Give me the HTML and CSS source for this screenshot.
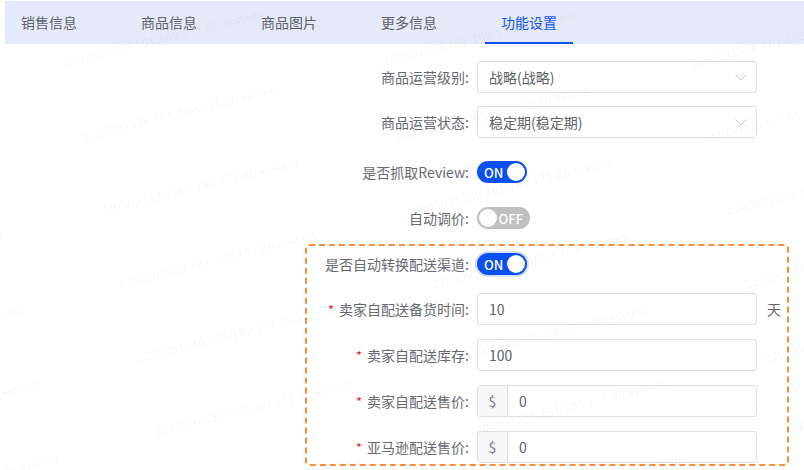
FILE: index.html
```html
<!DOCTYPE html>
<html lang="zh-CN">
<head>
<meta charset="utf-8">
<title>功能设置</title>
<link rel="stylesheet" href="styles.css">
</head>
<body>
<div class="page">
  <div class="tabs">
    <div class="tab">销售信息</div>
    <div class="tab">商品信息</div>
    <div class="tab">商品图片</div>
    <div class="tab">更多信息</div>
    <div class="tab active">功能设置</div>
  </div>

  <div class="form">
    <div class="row r1">
      <label class="label">商品运营级别:</label>
      <div class="select">
        <span>战略(战略)</span>
        <svg class="arrow" width="12" height="7" viewBox="0 0 12 7"><polyline points="0.5,0.5 6,6 11.5,0.5" fill="none" stroke="#c0c4cc" stroke-width="1"/></svg>
      </div>
    </div>
    <div class="row r2">
      <label class="label">商品运营状态:</label>
      <div class="select">
        <span>稳定期(稳定期)</span>
        <svg class="arrow" width="12" height="7" viewBox="0 0 12 7"><polyline points="0.5,0.5 6,6 11.5,0.5" fill="none" stroke="#c0c4cc" stroke-width="1"/></svg>
      </div>
    </div>
    <div class="row r3">
      <label class="label">是否抓取Review:</label>
      <div class="switch on"><span class="sw-text">ON</span><span class="knob"></span></div>
    </div>
    <div class="row r4">
      <label class="label">自动调价:</label>
      <div class="switch off"><span class="knob"></span><span class="sw-text">OFF</span></div>
    </div>

    <div class="box">
      <div class="row b1">
        <label class="label">是否自动转换配送渠道:</label>
        <div class="switch on focus"><span class="sw-text">ON</span><span class="knob"></span></div>
      </div>
      <div class="row b2">
        <label class="label"><i class="req">*</i>卖家自配送备货时间:</label>
        <div class="input"><span>10</span></div>
        <span class="unit">天</span>
      </div>
      <div class="row b3">
        <label class="label"><i class="req">*</i>卖家自配送库存:</label>
        <div class="input"><span>100</span></div>
      </div>
      <div class="row b3">
        <label class="label"><i class="req">*</i>卖家自配送售价:</label>
        <div class="input group"><span class="addon">$</span><span class="val">0</span></div>
      </div>
      <div class="row b3">
        <label class="label"><i class="req">*</i>亚马逊配送售价:</label>
        <div class="input group"><span class="addon">$</span><span class="val">0</span></div>
      </div>
    </div>
  </div>
</div>
<div class="watermark"><div class="wm-grid" id="wm"></div></div>
<script src="watermark.js"></script>
</body>
</html>
```

FILE: styles.css
```css
* { box-sizing: border-box; }
html, body { margin: 0; padding: 0; background: #fff; }
body {
  width: 804px;
  height: 470px;
  overflow: hidden;
  position: relative;
  font-family: "Noto Sans CJK SC", "Noto Sans", sans-serif;
  font-size: 13px;
  color: #606266;
}
.tabs {
  margin: 1px 0 0 5px;
  height: 43px;
  background: #e4eaf9;
  display: flex;
  gap: 32px;
}
.tab {
  padding: 2px 16px 0;
  height: 43px;
  line-height: 39px;
  font-size: 14px;
  color: #5f6268;
  border-bottom: 2px solid transparent;
}
.tab.active {
  color: #1553f0;
  border-bottom-color: #0a4ff5;
}
.form {
  padding-left: 305px;
  margin-top: 17px;
}
.row {
  display: flex;
  align-items: center;
  height: 32px;
}
.label {
  width: 164px;
  margin-right: 8px;
  text-align: right;
  white-space: nowrap;
  font-size: 14px;
  color: #666a70;
}
.box .label { width: 162px; }
.r2 { margin-top: 13px; }
.r3 { margin-top: 18px; }
.r4 { margin-top: 14px; }
.box {
  width: 484px;
  margin-top: 10px;
  border: 2px dashed #ff8a3a;
  border-radius: 4px;
  padding: 2px 0 1px;
}
.b2 { margin-top: 13px; }
.b3 { margin-top: 14px; }
.select, .input {
  width: 280px;
  height: 32px;
  border: 1px solid #dcdfe6;
  border-radius: 3px;
  display: flex;
  align-items: center;
  padding-left: 11px;
  font-size: 14px;
  color: #606266;
  background: #fff;
}
.select { justify-content: space-between; padding-right: 9px; }
.arrow { display: block; }
.input.group { padding-left: 0; }
.addon {
  width: 30px;
  height: 100%;
  background: #f5f7fa;
  border-right: 1px solid #dcdfe6;
  display: flex;
  align-items: center;
  justify-content: center;
  color: #777;
  border-radius: 3px 0 0 3px;
}
.val { padding-left: 11px; }
.unit { margin-left: 10px; font-size: 14px; color: #606266; }
.req {
  font-style: normal;
  font-size: 13px;
  color: #f5222d;
  margin-right: 5px;
}
.switch {
  height: 22px;
  border-radius: 11px;
  display: flex;
  align-items: center;
  padding: 0 2px;
  font-size: 13px;
  color: #fff;
  font-weight: 500;
}
.switch.on { width: 50px; background: #0a4ff0; justify-content: space-between; padding-left: 7px; }
.switch.off { width: 53px; background: #bfbfbf; padding-right: 7px; justify-content: space-between; }
.switch.focus { box-shadow: 0 0 0 2px rgba(10, 79, 240, 0.18); }
.knob {
  width: 18px;
  height: 18px;
  border-radius: 50%;
  background: #fff;
}
.watermark {
  position: absolute;
  left: 0;
  top: 0;
  width: 804px;
  height: 470px;
  overflow: hidden;
  pointer-events: none;
}
.wm-grid {
  position: absolute;
  left: 83px;
  top: 142px;
  transform-origin: 0 0;
  transform: rotate(-14deg);
}
.wm-item {
  position: absolute;
  white-space: nowrap;
  font-family: "DejaVu Serif", serif;
  font-size: 11px;
  line-height: 12px;
  color: rgba(0, 0, 0, 0.06);
}
```

FILE: watermark.js
```js
(function () {
  var grid = document.getElementById('wm');
  var text = '2205091536 161.189.171.80 system';
  for (var r = -6; r <= 9; r++) {
    for (var c = -4; c <= 5; c++) {
      var s = document.createElement('span');
      s.className = 'wm-item';
      s.textContent = text;
      s.style.left = (c * 304) + 'px';
      s.style.top = (r * 76 - 10) + 'px';
      grid.appendChild(s);
    }
  }
})();
```
